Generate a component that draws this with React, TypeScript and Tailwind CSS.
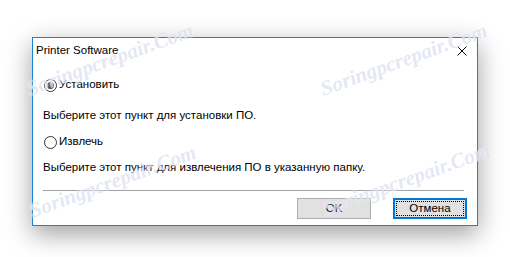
import { useState } from "react";

type Choice = "install" | "extract";

const marks = [
  { left: "left-[110px]", top: "top-[60px]" },
  { left: "left-[404px]", top: "top-[60px]" },
  { left: "left-[113px]", top: "top-[182px]" },
  { left: "left-[407px]", top: "top-[180px]" },
];

function Radio({ checked }: { checked: boolean }) {
  return (
    <span className="flex h-[13px] w-[13px] shrink-0 items-center justify-center rounded-full border border-[#333333] bg-white">
      {checked && <span className="h-[7px] w-[7px] rounded-full bg-[#333333]" />}
    </span>
  );
}

export default function App() {
  const [choice, setChoice] = useState<Choice>("install");

  return (
    <div className="relative h-[257px] w-[510px] overflow-hidden bg-white pl-[32px] pt-[37px] font-['Liberation_Sans',Arial,sans-serif] text-[11.5px] text-black">
      <div className="flex h-[189px] w-[446px] flex-col border border-[#1883d7] bg-white shadow-[0_8px_24px_rgba(0,0,0,0.38)]">
        <div className="flex h-[25px] items-center justify-between pl-[3px]">
          <span className="leading-none">Printer Software</span>
          <button type="button" className="flex h-full w-[30px] items-center justify-center" aria-label="Close">
            <svg width="10" height="10" viewBox="0 0 10 10" aria-hidden>
              <path d="M0.5 0.5L9.5 9.5M9.5 0.5L0.5 9.5" stroke="#000" strokeWidth="1" fill="none" />
            </svg>
          </button>
        </div>

        <button
          type="button"
          onClick={() => setChoice("install")}
          className="ml-[11px] mt-[14px] flex h-[16px] items-center gap-[2px] text-left"
        >
          <Radio checked={choice === "install"} />
          <span>Установить</span>
        </button>
        <p className="ml-[10px] mt-[14px] h-[16px] leading-[16px]">Выберите этот пункт для установки ПО.</p>

        <button
          type="button"
          onClick={() => setChoice("extract")}
          className="ml-[11px] mt-[11px] flex h-[16px] items-center gap-[2px] text-left"
        >
          <Radio checked={choice === "extract"} />
          <span>Извлечь</span>
        </button>
        <p className="ml-[10px] mt-[9px] h-[16px] leading-[16px]">
          Выберите этот пункт для извлечения ПО в указанную папку.
        </p>

        <div className="ml-[10px] mr-[13px] mt-[15px] h-px bg-[#a0a0a0]" />

        <div className="mr-[10px] mt-[7px] flex justify-end gap-[22px]">
          <button type="button" className="h-[21px] w-[74px] border border-[#adadad] bg-[#e1e1e1] text-black">
            OK
          </button>
          <button type="button" className="h-[21px] w-[74px] border-2 border-[#0078d7] bg-[#e1e1e1] p-px text-black">
            <span className="flex h-full w-full items-center justify-center border border-dotted border-black">
              Отмена
            </span>
          </button>
        </div>
      </div>

      {marks.map((m, i) => (
        <span
          key={i}
          className={`pointer-events-none absolute ${m.left} ${m.top} -translate-x-1/2 -translate-y-1/2 -rotate-[20deg] whitespace-nowrap font-['Liberation_Serif',serif] text-[21px] font-bold italic text-[#c3cbe8]/45 [text-shadow:0_0_2px_rgba(255,255,255,0.9)]`}
        >
          Soringpcrepair.Com
        </span>
      ))}
    </div>
  );
}
